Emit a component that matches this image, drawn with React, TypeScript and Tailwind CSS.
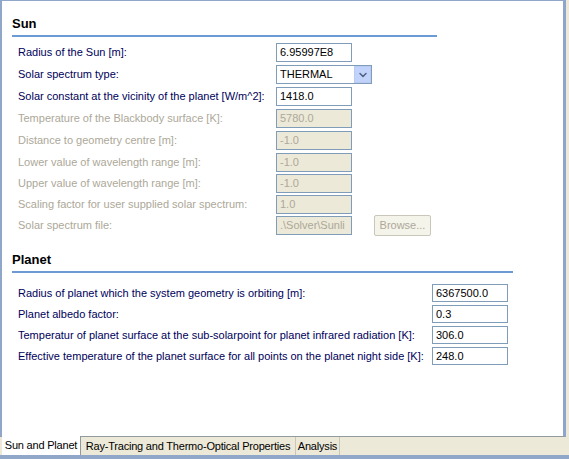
import { ChevronDown } from 'lucide-react';

const font = { fontFamily: 'Tahoma, "Liberation Sans", Arial, sans-serif' };

function Field({ value, disabled, h = 'h-[19px]' }: { value: string; disabled?: boolean; h?: string }) {
  return (
    <div
      className={`w-[76px] ${h} border border-[#7F9DB9] px-[3px] flex items-center text-[11px] leading-none overflow-hidden whitespace-nowrap ${
        disabled ? 'bg-[#ECE9D8] text-[#ACA899]' : 'bg-white text-black'
      }`}
    >
      {value}
    </div>
  );
}

function Combo({ value }: { value: string }) {
  return (
    <div className="w-[96px] h-[19px] border border-[#7F9DB9] bg-white flex items-center text-[11px] leading-none">
      <span className="pl-[3px] flex-1">{value}</span>
      <div className="w-[17px] h-[17px] bg-[#C1D3FB] border border-[#B9CBF3] flex items-center justify-center">
        <ChevronDown className="w-3 h-3 text-[#4D6185]" strokeWidth={3} />
      </div>
    </div>
  );
}

function Row({ label, children, disabled, labelWidth, tight }: { label: string; children: React.ReactNode; disabled?: boolean; labelWidth: string; tight?: boolean }) {
  return (
    <div className={`flex items-center ${tight ? '-mt-px' : ''}`}>
      <div className={`${labelWidth} text-[11px] whitespace-nowrap ${disabled ? 'text-[#ACA899]' : 'text-[#00005A]'}`}>{label}</div>
      {children}
    </div>
  );
}

export default function App() {
  const sun = [
    { label: 'Temperature of the Blackbody surface [K]:', value: '5780.0' },
    { label: 'Distance to geometry centre [m]:', value: '-1.0' },
    { label: 'Lower value of wavelength range [m]:', value: '-1.0' },
    { label: 'Upper value of wavelength range [m]:', value: '-1.0' },
    { label: 'Scaling factor for user supplied solar spectrum:', value: '1.0' },
  ];
  const planet = [
    { label: 'Radius of planet which the system geometry is orbiting [m]:', value: '6367500.0' },
    { label: 'Planet albedo factor:', value: '0.3' },
    { label: 'Temperatur of planet surface at the sub-solarpoint for planet infrared radiation [K]:', value: '306.0' },
    { label: 'Effective temperature of the planet surface for all points on the planet night side [K]:', value: '248.0' },
  ];

  return (
    <div className="w-[569px] h-[459px] bg-[#ECE9D8] flex flex-col overflow-hidden" style={font}>
      <div className="h-[437px] flex">
        <div className="w-[566px] bg-white border-l-2 border-t border-r-[3px] border-b border-l-[#91A7C9] border-t-[#91A7C9] border-r-[#8FA6CC] border-b-[#919B9C] flex flex-col">
          {/* Sun */}
          <div className="pl-[10px] pt-[13px]">
            <div className="text-[13px] font-bold text-black leading-[20px]">Sun</div>
            <div className="mt-[1px] w-[425px] h-[2px] bg-[#6B9BD2]" />
            <div className="pl-[6px] pt-[6px] flex flex-col gap-[3px]">
              <Row label="Radius of the Sun [m]:" labelWidth="w-[258px]">
                <Field value="6.95997E8" />
              </Row>
              <Row label="Solar spectrum type:" labelWidth="w-[258px]">
                <Combo value="THERMAL" />
              </Row>
              <Row label="Solar constant at the vicinity of the planet [W/m^2]:" labelWidth="w-[258px]">
                <Field value="1418.0" />
              </Row>
              {sun.map((r, i) => (
                <Row key={r.label} label={r.label} disabled labelWidth="w-[258px]" tight={i >= 3}>
                  <Field value={r.value} disabled />
                </Row>
              ))}
              <Row label="Solar spectrum file:" disabled labelWidth="w-[258px]" tight>
                <Field value=".\Solver\Sunli" disabled />
                <div className="ml-[22px] -my-px w-[57px] h-[21px] border border-[#C9C7BA] rounded-[2px] bg-[#F5F4EA] text-[11px] text-[#ACA899] flex items-center justify-center">
                  Browse...
                </div>
              </Row>
            </div>
          </div>

          {/* Planet */}
          <div className="pl-[10px] pt-[15px]">
            <div className="text-[13px] font-bold text-black leading-[20px]">Planet</div>
            <div className="mt-[1px] w-[501px] h-[2px] bg-[#6B9BD2]" />
            <div className="pl-[6px] pt-[11px] flex flex-col gap-[3px]">
              {planet.map((r) => (
                <Row key={r.label} label={r.label} labelWidth="w-[414px]">
                  <Field value={r.value} h="h-[18px]" />
                </Row>
              ))}
            </div>
          </div>
        </div>
      </div>
      {/* Tabs */}
      <div className="h-[18px] flex text-[11px] text-black tracking-[-0.2px]">
        <div className="ml-[2px] w-[79px] bg-white flex items-center justify-center border-r border-[#919B9C] -mt-px h-[19px]">Sun and Planet</div>
        <div className="w-[215px] flex items-center justify-center border-r border-[#C9C7BA]">Ray-Tracing and Thermo-Optical Properties</div>
        <div className="w-[44px] flex items-center justify-center border-r border-[#C9C7BA]">Analysis</div>
      </div>
      <div className="flex-1 bg-[#91A7C9]" />
    </div>
  );
}
